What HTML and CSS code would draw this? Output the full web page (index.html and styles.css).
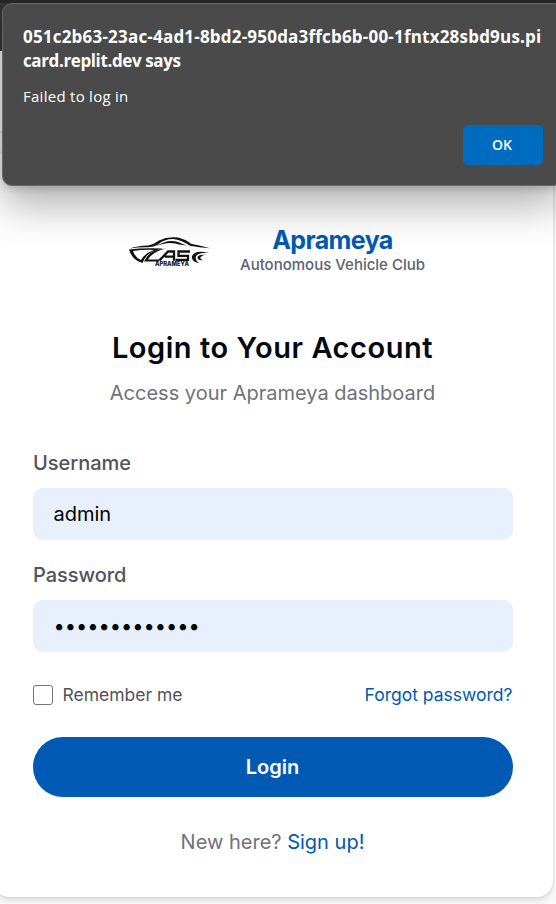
FILE: index.html
```html
<!DOCTYPE html>
<html lang="en">
<head>
<meta charset="utf-8">
<title>Login to Your Account</title>
<link rel="stylesheet" href="styles.css">
</head>
<body>
<div class="toolbar"></div>
<div class="site-header"></div>
<main class="card">
  <header class="brand">
    <svg class="logo" viewBox="0 0 100 50" aria-label="Aprameya">
      <g fill="#111">
        <path d="M10 22.600Q17 19.600 28 19.400Q34 18.500 39 14.500Q48 10 58 11.500Q66 13.500 71 17.800Q80 19.600 90 22.200Q79 21.500 70 19.800Q62 14 53 13Q44 13 38 18.500Q34 21 28 21.200Q18 21 10 22.600Z"/>
        <path d="M35 20.500Q48 12.500 58 16Q63 18 67 19.600Q60 19 55 17.400Q46 15.500 35 20.500Z"/>
        <path d="M9 23.500Q24 21.500 43 22.500Q32 24.500 27 29.500Q24 33 22.500 37Q12 34 9 23.500ZM13 25Q15 31.500 21 34Q25 27 34 23.900Q22 23.500 13 25Z" fill-rule="evenodd"/>
        <path d="M46 22.800Q33 25 28 33.600H40L38.600 35.500H24Q30 22.500 46 22.800Z"/>
        <path d="M89 26.800Q75 23.500 72 30Q71 36 79 37Q74 33.500 76.500 29.500Q80 26 89 26.800Z"/>
        <path d="M86 28.800Q77.500 28 77.500 31.800Q78 34.800 83 34Q79.500 33 80.500 31.200Q82 29.200 86 28.800Z"/>
      </g>
      <g fill="none" stroke="#111" stroke-width="2.3">
        <path d="M39.500 34.400L48 25.500H54V34.800M45 30.600H54"/>
        <path d="M70 25.500H58.500V29.800H68V33.800H55.500"/>
      </g>
      <text class="logo-name" x="35" y="40.300" textLength="34" lengthAdjust="spacingAndGlyphs">APRAMEYA</text>
    </svg>
    <div class="brand-text">
      <div class="brand-name"><span>Aprameya</span></div>
      <div class="brand-sub"><span>Autonomous Vehicle Club</span></div>
    </div>
  </header>
  <h1><span>Login to Your Account</span></h1>
  <p class="lead"><span>Access your Aprameya dashboard</span></p>
  <form>
    <label class="label" for="username">Username</label>
    <input class="field" id="username" type="text" value="admin">
    <label class="label" for="password">Password</label>
    <input class="field password" id="password" type="password" value="aaaaaaaaaaaaa">
    <div class="options">
      <label class="remember"><span class="box"></span><span>Remember me</span></label>
      <a class="forgot">Forgot password?</a>
    </div>
    <button class="login" type="button">Login</button>
  </form>
  <p class="signup"><span>New here? <a>Sign up!</a></span></p>
</main>
<section class="dialog" role="alertdialog">
  <h2><span class="host">051c2b63-23ac-4ad1-8bd2-950da3ffcb6b-00-1fntx28sbd9us.pi</span><br><span class="host-rest">card.replit.dev says</span></h2>
  <p>Failed to log in</p>
  <button type="button">OK</button>
</section>
</body>
</html>
```
FILE: styles.css
```css
* { box-sizing: border-box; }
html { overflow: hidden; }
body {
  margin: 0;
  height: 904px;
  overflow: hidden;
  position: relative;
  background: #fafafa;
  font-family: Inter, sans-serif;
}
h1, h2, p { margin: 0; }
.toolbar { height: 51px; background: #383838; border-top: 3px solid #292929; }
.site-header { height: 80px; background: #fff; box-shadow: 0 1px 3px rgba(0,0,0,.2); }
.card {
  width: 560px;
  height: 746px;
  margin: 20px 0 0 -7px;
  padding: 75px 40px 0;
  background: #fff;
  border-radius: 16px;
  box-shadow: 0 4px 6px rgba(0,0,0,.1), 0 0 3px rgba(0,0,0,.13);
}
.brand { display: flex; height: 50px; padding-left: 87px; }
.logo { width: 100px; height: 50px; flex: none; }
.logo-name { font: 800 5.5px Inter, sans-serif; fill: #111; }
.brand-text { margin-left: 20px; width: 185px; text-align: center; white-space: nowrap; }
.brand-name { height: 29px; line-height: 29px; font-size: 25px; font-weight: 700; color: #0059b3; letter-spacing: -.6px; }
.brand-sub { line-height: 20px; font-size: 15px; font-weight: 500; color: #5b6370; }
h1 { margin: 52px 0 0 -1px; line-height: 40px; font-size: 29px; font-weight: 600; letter-spacing: .55px; text-align: center; color: #030712; white-space: nowrap; }
.lead { margin: 11px 0 0 -1px; line-height: 28px; font-size: 20px; text-align: center; color: #71717a; white-space: nowrap; }
form { margin-top: 42px; display: flex; flex-direction: column; }
.label { height: 39px; line-height: 28px; font-size: 20px; font-weight: 500; color: #52525b; letter-spacing: -.03px; }
.field {
  width: 480px;
  height: 52px;
  margin: 0 0 21px;
  padding: 0 20px 0 19.5px;
  border: 1px solid #e7effb;
  border-radius: 10px;
  background: #e8f0fe;
  font: 20px Inter, sans-serif;
  color: #000;
}
.password { margin-bottom: 31px; }
.options { display: flex; justify-content: space-between; align-items: center; height: 24px; font-size: 17.5px; line-height: 22px; white-space: nowrap; }
.remember { display: flex; align-items: center; gap: 9.5px; color: #52525b; }
.remember span:last-child, .forgot { margin-top: -1px; }
.forgot { margin-right: .5px; }
.box { width: 20px; height: 20px; border: 1px solid #767676; border-radius: 3px; background: #fff; }
.forgot, .signup a { color: #0059b3; }
.login {
  height: 60px;
  margin-top: 30px;
  padding: 0 1px 0 0;
  border: 0;
  border-radius: 30px;
  background: #0059b3;
  color: #fff;
  font: 600 20px Inter, sans-serif;
}
.signup { margin: 31px 0 0 -1px; line-height: 28px; font-size: 20px; text-align: center; color: #71717a; white-space: nowrap; }
.dialog {
  position: absolute;
  left: 2px;
  top: 3px;
  width: 561px;
  height: 183px;
  padding: 21px 19px 20px 20px;
  display: flex;
  flex-direction: column;
  background: #4a4a4a;
  border: 1px solid #696969;
  border-radius: 10px;
  box-shadow: 0 20px 40px rgba(0,0,0,.3), 0 2px 10px rgba(0,0,0,.2);
  font-family: "Open Sans", sans-serif;
  color: #fff;
}
.dialog h2 { line-height: 24px; font-size: 17px; font-weight: 700; white-space: nowrap; }
.host { letter-spacing: .2px; }
.host-rest { letter-spacing: -.38px; }
.dialog p { margin-top: 12px; line-height: 22px; font-size: 15px; letter-spacing: .27px; }
.dialog button {
  width: 80px;
  height: 40px;
  margin: auto 0 0 440px;
  padding: 0 2px 2px 0;
  flex: none;
  border: 0;
  border-radius: 5px;
  background: #006cbf;
  color: #fff;
  font: 600 14px "Open Sans", sans-serif;
}
```
